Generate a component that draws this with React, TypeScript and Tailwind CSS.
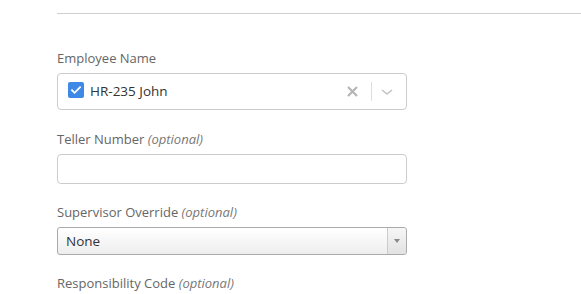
import React from "react";

function Label({ text, optional }: { text: string; optional?: boolean }) {
  return (
    <div className="text-[13px] leading-[18px] text-[#666]">
      {text}
      {optional && <em className="text-[#777]"> (optional)</em>}
    </div>
  );
}

export default function App() {
  return (
    <div
      className="w-[581px] h-[294px] overflow-hidden bg-white pl-[57px]"
      style={{ fontFamily: '"Open Sans", "Noto Sans", sans-serif' }}
    >
      <div className="mt-[13px] border-t border-[#cfcfcf]" />

      <div className="w-[350px] pt-[35px]">
        {/* Employee Name */}
        <Label text="Employee Name" />
        <div className="mt-[6px] h-[37px] flex items-center border border-[#ccc] rounded-[4px] pl-[10px] pr-[8px]">
          <span className="w-[16px] h-[16px] rounded-[2px] bg-[#3e88e6] flex items-center justify-center mt-[-4px]">
            <svg width="12" height="12" viewBox="0 0 12 12" fill="none">
              <path d="M2 6.2l2.6 2.6L10 3.3" stroke="white" strokeWidth="1.8" strokeLinecap="square" />
            </svg>
          </span>
          <span className="ml-[6px] text-[13.5px] text-[#333]">HR-235 John</span>
          <span className="flex-1" />
          <svg width="11" height="11" viewBox="0 0 11 11" className="mr-[13px]">
            <path d="M1 1l9 9M10 1l-9 9" stroke="#b5b5b5" strokeWidth="2.2" />
          </svg>
          <span className="w-px h-[19px] bg-[#ddd]" />
          <svg width="12" height="8" viewBox="0 0 12 8" className="ml-[9px] mr-[5px]">
            <path d="M1 2l5 4 5-4" stroke="#c3c3c3" strokeWidth="1.6" fill="none" />
          </svg>
        </div>

        {/* Teller Number */}
        <div className="mt-[20px]">
          <Label text="Teller Number" optional />
        </div>
        <div className="mt-[6px] h-[30px] border border-[#ccc] rounded-[4px]" />

        {/* Supervisor Override */}
        <div className="mt-[19px]">
          <Label text="Supervisor Override" optional />
        </div>
        <div className="mt-[6px] h-[28px] flex border border-[#aaa] rounded-[3px] bg-gradient-to-b from-white to-[#eeeeee]">
          <span className="flex-1 pl-[8px] text-[13.5px] leading-[26px] text-[#333]">None</span>
          <span className="w-[19px] border-l border-[#ccc] flex items-center justify-center bg-gradient-to-b from-[#f6f6f6] to-[#e2e2e2] rounded-r-[3px]">
            <svg width="6" height="4" viewBox="0 0 6 4">
              <path d="M0 0h6L3 4z" fill="#888" />
            </svg>
          </span>
        </div>

        {/* Responsibility Code */}
        <div className="mt-[19px]">
          <Label text="Responsibility Code" optional />
        </div>
      </div>
    </div>
  );
}
